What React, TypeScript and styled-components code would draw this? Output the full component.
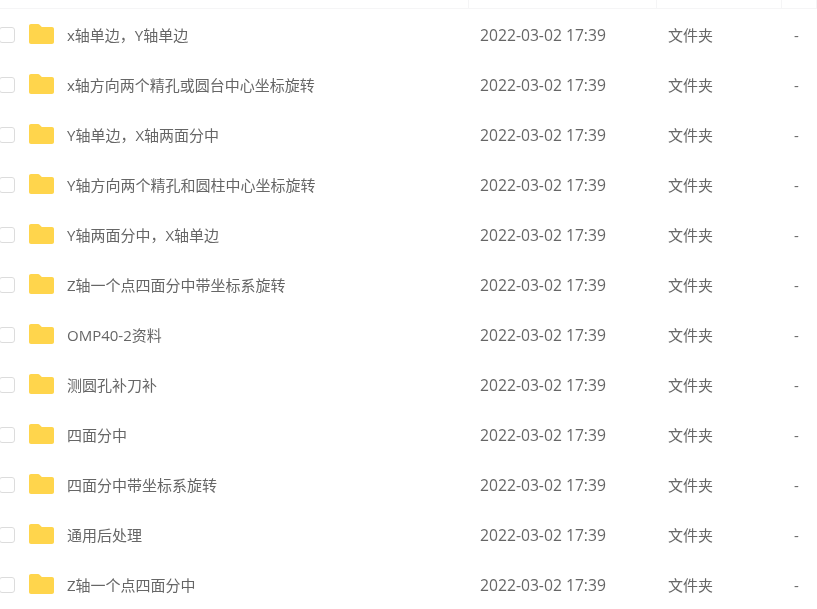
import styled, { createGlobalStyle } from "styled-components";

const files = [
  "x轴单边，Y轴单边",
  "x轴方向两个精孔或圆台中心坐标旋转",
  "Y轴单边，X轴两面分中",
  "Y轴方向两个精孔和圆柱中心坐标旋转",
  "Y轴两面分中，X轴单边",
  "Z轴一个点四面分中带坐标系旋转",
  "OMP40-2资料",
  "测圆孔补刀补",
  "四面分中",
  "四面分中带坐标系旋转",
  "通用后处理",
  "Z轴一个点四面分中",
];

const FolderIcon = () => (
  <svg width="25" height="20" viewBox="0 0 25 20">
    <path
      d="M0 2C0 .9.9 0 2 0h7c.7 0 1.200.3 1.600.8L12.800 3H23c1.100 0 2 .9 2 2v13c0 1.100-.9 2-2 2H2c-1.100 0-2-.9-2-2z"
      fill="#ffd54c"
    />
  </svg>
);

export default function App() {
  return (
    <>
      <GlobalStyle />
      <Page>
        <HeaderRow>
          <HeaderCell $width={469} />
          <HeaderCell $width={188} />
          <HeaderCell $width={125} />
          <HeaderCell $width={35} />
        </HeaderRow>
        {files.map((name) => (
          <Row key={name}>
            <Checkbox />
            <FolderSlot>
              <FolderIcon />
            </FolderSlot>
            <Name>{name}</Name>
            <Time>2022-03-02 17:39</Time>
            <Type>文件夹</Type>
            <Size>-</Size>
          </Row>
        ))}
      </Page>
    </>
  );
}

const GlobalStyle = createGlobalStyle`
  html, body {
    margin: 0;
    background: #fff;
    overflow: hidden;
  }
`;

const Page = styled.div`
  width: 817px;
  height: 609px;
  overflow: hidden;
  font-family: "Open Sans", "Noto Sans CJK SC", sans-serif;
  font-size: 15px;
  color: #666;
  filter: blur(0.35px);
`;

const HeaderRow = styled.div`
  display: flex;
  height: 8px;
  margin-bottom: 1px;
  border-bottom: 1px solid #f5f5f6;
`;

const HeaderCell = styled.div<{ $width: number }>`
  width: ${(p) => p.$width}px;
  box-sizing: border-box;
  border-right: 1px solid #f5f5f6;
`;

const Row = styled.div`
  display: flex;
  align-items: center;
  height: 50px;
`;

const Checkbox = styled.div`
  width: 16px;
  height: 16px;
  margin-left: -1px;
  box-sizing: border-box;
  border: 1px solid #dcdcdc;
  border-radius: 3px;
  background: #fff;
`;

const FolderSlot = styled.div`
  display: flex;
  width: 25px;
  margin-left: 14px;
  margin-top: -2px;
`;

const Name = styled.div`
  width: 413px;
  margin-left: 13px;
  margin-bottom: 2px;
  white-space: nowrap;
`;

const Time = styled.div`
  width: 188px;
  font-size: 15.7px;
  white-space: nowrap;
`;

const Type = styled.div`
  width: 126px;
  margin-bottom: 2px;
`;

const Size = styled.div`
  width: 20px;
`;
